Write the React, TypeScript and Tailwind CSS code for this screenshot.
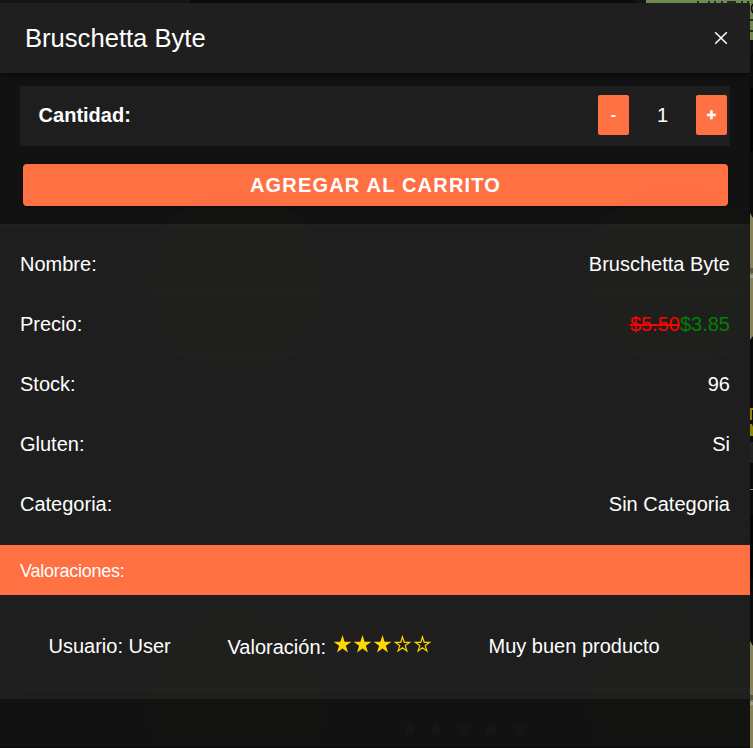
import React from "react";

const details = [
  { label: "Nombre:", value: "Bruschetta Byte" },
  { label: "Precio:", value: "$3.85", old: "$5.50" },
  { label: "Stock:", value: "96" },
  { label: "Gluten:", value: "Si" },
  { label: "Categoria:", value: "Sin Categoria" },
];

const STAR = "M9.5 0 11.6 6.7H18.4L12.9 10.8 15 17.5 9.5 13.5 4 17.5 6.1 10.8 .6 6.7H7.4Z";
const STAR_OUTLINE = "M9.5 1.9 11.2 7.3H16.7L12.2 10.6 13.9 15.9 9.5 12.7 5.1 15.9 6.8 10.6 2.3 7.3H7.8Z";

function Star({ filled }: { filled: boolean }) {
  return (
    <svg width="20" height="20" viewBox="0 0 20 20" className="shrink-0">
      <path
        d={filled ? STAR : STAR_OUTLINE}
        fill={filled ? "#ffd700" : "none"}
        stroke={filled ? "none" : "#ffd700"}
        strokeWidth="1.2"
      />
    </svg>
  );
}

/* Dimmed product page that stays visible around the modal's edges. */
function Backdrop() {
  return (
    <svg className="absolute inset-0" width="753" height="748" viewBox="0 0 753 748">
      <rect width="753" height="748" fill="#0b0b0b" />
      <rect width="190" height="4" fill="#141414" />
      <rect x="635" width="11" height="4" fill="#141414" />
      <rect x="646" width="107" height="40" fill="#718a54" />
      <path
        d="M697 2h2M708 2h2M714 2h2M721 2h2M727 2h9M741 2h2M747 2h2M753 4q-3 4 0 9M750 20h3M750 31h3"
        stroke="#0b0b0b"
        strokeWidth="1.6"
        fill="none"
      />
      <rect x="750" y="40" width="3" height="13" fill="#101010" />
      <rect x="750" y="88" width="3" height="63" fill="#030303" />
      <path d="M750 213l3 5v118l-3 4z" fill="#8a8359" />
      <rect x="750" y="268" width="3" height="5" fill="#5b5744" />
      <rect x="750" y="275" width="3" height="3" fill="#a09e98" />
      <path d="M750 408h3v2h-1v10h-2z" fill="#918400" />
      <path d="M750 424h2l1 3v9h-3z" fill="#918400" />
      <rect x="750" y="442" width="3" height="21" fill="#222" />
      <rect x="750" y="489" width="3" height="1" fill="#8b8b8b" />
      <rect x="750" y="515" width="3" height="64" fill="#050505" />
      <path d="M750 641l3 5v102h-3z" fill="#8a8359" />
      <rect x="750" y="695" width="3" height="5" fill="#5b5744" />
      <rect x="750" y="702" width="3" height="3" fill="#a09e98" />
    </svg>
  );
}

function Ghosts() {
  return (
    <svg className="pointer-events-none absolute inset-0" width="750" height="748" viewBox="0 3 750 748">
      <g fill="#c0b070" fillOpacity="0.01">
        <circle cx="236" cy="284" r="92" />
        <circle cx="677" cy="276" r="92" />
        <circle cx="236" cy="697" r="92" />
        <circle cx="677" cy="697" r="92" />
      </g>
      <g fill="#ffffff" fillOpacity="0.018">
        {[401, 428, 455, 482, 511].map((x) => (
          <path key={x} d={STAR} transform={`translate(${x} 721) scale(0.9)`} />
        ))}
      </g>
    </svg>
  );
}

export default function App() {
  return (
    <div className="relative h-[748px] w-[753px] overflow-hidden font-['Liberation_Sans',Arial,sans-serif] text-[20px] leading-[24px] text-white">
      <Backdrop />
      <main className="relative mt-[3px] flex h-[744px] w-[750px] flex-col overflow-hidden rounded-t-[2px] bg-[#121212]">
        <header className="z-10 flex h-[70px] shrink-0 items-center justify-between bg-[#1f1f1f] pr-[22px] pl-[25px] shadow-[0_2px_6px_rgba(0,0,0,0.55)]">
          <h1 className="text-[25.6px] leading-[30px]">Bruschetta Byte</h1>
          <button aria-label="Cerrar">
            <svg width="14" height="14" viewBox="0 0 14 14" fill="none" stroke="#fff" strokeWidth="1.5">
              <path d="M1.2 1.2 12.8 12.8M12.8 1.2 1.2 12.8" />
            </svg>
          </button>
        </header>

        <section className="mx-5 mt-[13px] flex h-[60px] shrink-0 items-center justify-between bg-[#1e1e1e] pr-[3px] pb-[2px] pl-[18.6px]">
          <span className="font-bold">Cantidad:</span>
          <div className="flex items-center">
            <button className="h-10 w-[31px] rounded-[2px] bg-[#ff7043] text-[16px] font-bold">-</button>
            <span className="w-[67px] text-center">1</span>
            <button className="h-10 w-[31px] rounded-[2px] bg-[#ff7043] text-[16px] font-bold [-webkit-text-stroke:0.6px_#fff]">
              +
            </button>
          </div>
        </section>

        <button className="mt-[18px] mr-[22px] ml-[23px] h-[42px] shrink-0 rounded-[4px] bg-[#ff7043] font-bold tracking-[1.2px] shadow-[0_2px_3px_rgba(0,0,0,0.3)]">
          AGREGAR AL CARRITO
        </button>

        <section className="mt-[18px] h-[321px] shrink-0 border-t border-[#222] bg-[#1e1e1e] pt-[10px]">
          {details.map((d) => (
            <div
              key={d.label}
              className="ml-5 flex h-[60px] items-center justify-between border-b border-[#222] pr-5 pb-[2px]"
            >
              <span>{d.label}</span>
              <span>
                {d.old && <s className="text-[#ff0000]">{d.old}</s>}
                <span className={d.old ? "text-[#008000]" : ""}>{d.value}</span>
              </span>
            </div>
          ))}
        </section>

        <h2 className="flex h-[50px] shrink-0 items-center bg-[#ff7043] pt-[2px] pl-5 text-[18px] tracking-[-0.25px]">
          Valoraciones:
        </h2>

        <section className="h-[104px] shrink-0 bg-[#1e1e1e]">
          <div className="ml-5 flex h-[94px] items-center border-b border-[#222] pt-[9px] pl-[28.5px]">
            <span className="w-[179px]">Usuario: User</span>
            <div className="flex w-[261px] pt-px">
              <span className="w-[105px]">Valoración:</span>
              {[1, 2, 3, 4, 5].map((n) => (
                <Star key={n} filled={n <= 3} />
              ))}
            </div>
            <span>Muy buen producto</span>
          </div>
        </section>
        <Ghosts />
      </main>
    </div>
  );
}
